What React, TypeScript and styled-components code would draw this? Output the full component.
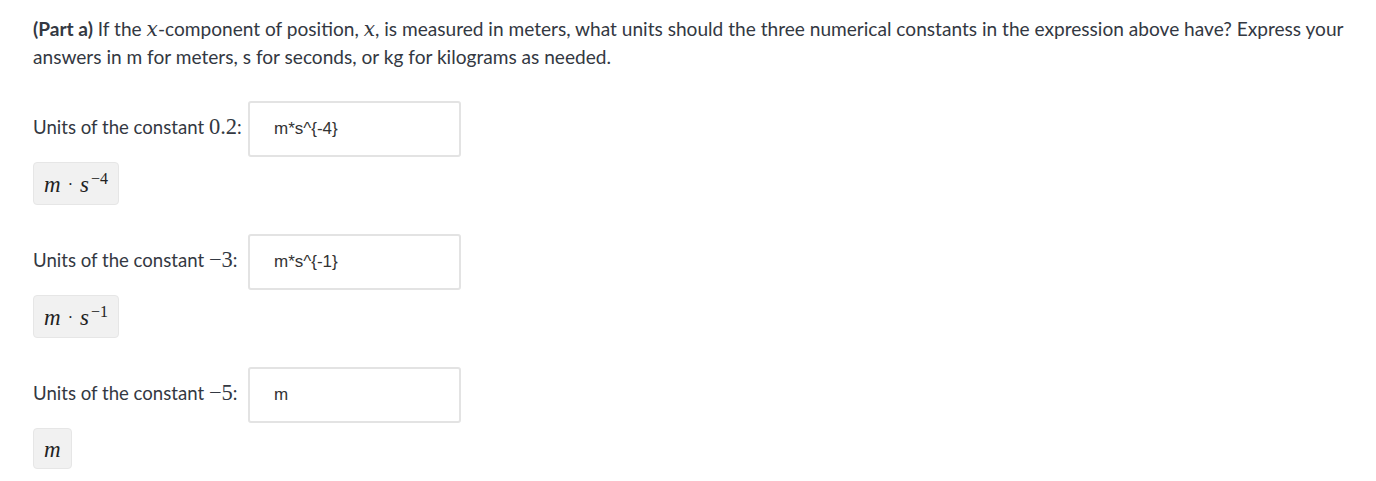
import React from "react";
import styled, { createGlobalStyle } from "styled-components";

const Global = createGlobalStyle`
  html, body { margin: 0; padding: 0; background: #ffffff; }
  body { font-family: "Lato", "Noto Sans", sans-serif; color: #333842; }
`;

const Page = styled.div`
  padding: 15px 33px 12px 33px;
  display: flex;
  flex-direction: column;
`;

const Prompt = styled.p`
  margin: 0 0 30px 0;
  font-size: 19.1px;
  line-height: 28px;
  color: #333842;
`;

const Line = styled.span`
  display: block;
  white-space: nowrap;
`;

const Strong = styled.strong`
  font-weight: 700;
`;

const MathI = styled.span`
  font-family: "DejaVu Serif", "Liberation Serif", serif;
  font-style: italic;
  font-size: 1.05em;
  line-height: 1;
`;

const MathR = styled.span`
  font-family: "Liberation Serif", "DejaVu Serif", serif;
  font-size: 1.21em;
  line-height: 1;
`;

const Block = styled.div`
  display: flex;
  flex-direction: column;
  align-items: flex-start;
  gap: 5px;
  margin-bottom: 29px;
  &:last-child { margin-bottom: 0; }
`;

const Row = styled.label`
  display: grid;
  grid-template-columns: 210px 213px;
  align-items: center;
  column-gap: 5px;
  font-size: 18.6px;
  color: #333842;
`;

const LabelText = styled.span`
  white-space: nowrap;
  position: relative;
  top: -2px;
`;

const Input = styled.input`
  box-sizing: border-box;
  width: 213px;
  height: 56px;
  border: 2px solid #e3e3e3;
  border-radius: 3px;
  padding: 0 0 0 24px;
  font-family: "Liberation Sans", Arial, sans-serif;
  font-size: 17px;
  color: #333;
  background: #fff;
  outline: none;
`;

const Preview = styled.div<{ $h: number }>`
  box-sizing: border-box;
  height: ${(p) => p.$h}px;
  display: flex;
  align-items: center;
  padding: 2px 10px 0 10px;
  background: #f1f1f1;
  border: 1px solid #e6e6e6;
  border-radius: 4px;
  font-family: "Liberation Serif", "DejaVu Serif", serif;
  font-size: 23px;
  color: #222;
`;

const Var = styled.span`
  font-style: italic;
`;

const Dot = styled.span`
  margin: 0 7px;
  font-size: 16px;
`;

const Sup = styled.sup`
  font-size: 16px;
  position: relative;
  top: -6px;
  margin-left: 2px;
`;

type Item = { constant: React.ReactNode; value: string; exp: string | null; h: number };

const items: Item[] = [
  { constant: <MathR>0.2</MathR>, value: "m*s^{-4}", exp: "−4", h: 43 },
  { constant: <MathR>−3</MathR>, value: "m*s^{-1}", exp: "−1", h: 43 },
  { constant: <MathR>−5</MathR>, value: "m", exp: null, h: 41 },
];

export default function App() {
  return (
    <>
      <Global />
      <Page>
        <Prompt>
          <Line>
            <Strong>(Part a)</Strong> If the <MathI>x</MathI>-component of position, <MathI>x</MathI>, is measured in
            meters, what units should the three numerical constants in the expression above have? Express your
          </Line>
          <Line>answers in m for meters, s for seconds, or kg for kilograms as needed.</Line>
        </Prompt>
        {items.map((it, i) => (
          <Block key={i}>
            <Row>
              <LabelText>
                Units of the constant {it.constant}:
              </LabelText>
              <Input defaultValue={it.value} />
            </Row>
            <Preview $h={it.h}>
              <Var>m</Var>
              {it.exp && (
                <>
                  <Dot>·</Dot>
                  <Var>s</Var>
                  <Sup>{it.exp}</Sup>
                </>
              )}
            </Preview>
          </Block>
        ))}
      </Page>
    </>
  );
}
